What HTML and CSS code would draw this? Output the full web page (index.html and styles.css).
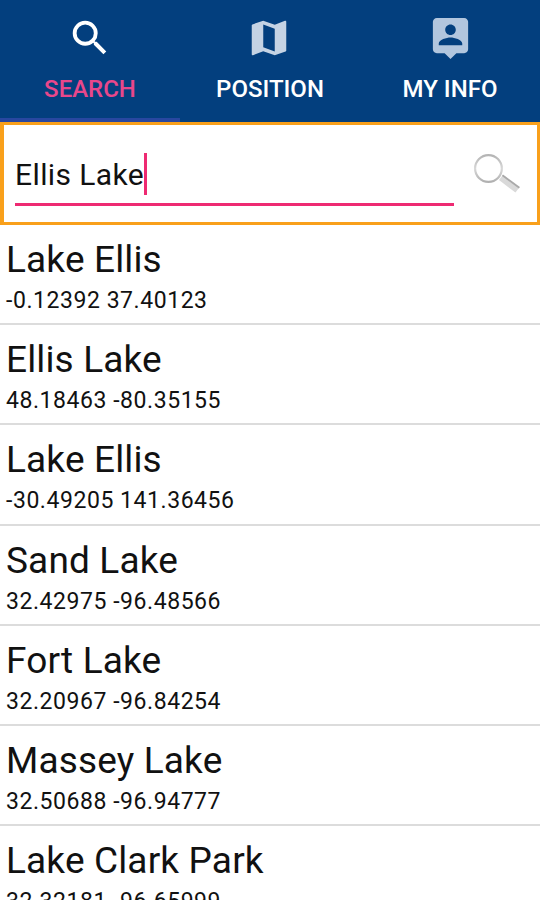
FILE: index.html
```html
<!DOCTYPE html>
<html lang="en">
<head>
    <meta charset="UTF-8">
    <meta name="viewport" content="width=device-width, initial-scale=1.0">
    <title>Search</title>
    <link rel="stylesheet" href="styles.css">
</head>
<body>
    <nav class="tabs">
        <div class="tab active">
            <svg class="icon" viewBox="0 0 24 24"><path d="M15.5 14h-.79l-.28-.27A6.47 6.47 0 0 0 16 9.5 6.5 6.5 0 1 0 9.5 16c1.61 0 3.09-.59 4.23-1.57l.27.28v.79l5 4.99L20.49 19l-4.99-5zm-6 0a4.5 4.5 0 1 1 0-9 4.5 4.5 0 0 1 0 9z"/></svg>
            <span class="label">SEARCH</span>
        </div>
        <div class="tab">
            <svg class="icon map" viewBox="0 0 24 24"><path d="M20.5 3l-.16.03L15 5.1 9 3 3.36 4.9c-.21.07-.36.25-.36.48V20.5c0 .28.22.5.5.5l.16-.03L9 18.9l6 2.1 5.64-1.9c.21-.07.36-.25.36-.48V3.5c0-.28-.22-.5-.5-.5zM15 19l-6-2.11V5l6 2.11V19z"/></svg>
            <span class="label">POSITION</span>
        </div>
        <div class="tab">
            <svg class="icon person" viewBox="0 0 24 24"><path d="M19 2H5c-1.11 0-2 .9-2 2v14c0 1.1.89 2 2 2h4l3 3 3-3h4c1.1 0 2-.9 2-2V4c0-1.1-.9-2-2-2zm-7 3.3c1.49 0 2.7 1.21 2.7 2.7 0 1.49-1.21 2.7-2.7 2.7-1.49 0-2.7-1.21-2.7-2.7 0-1.49 1.21-2.7 2.7-2.7zM18 16H6v-.9c0-2 4-3.1 6-3.1s6 1.1 6 3.1v.9z"/></svg>
            <span class="label">MY INFO</span>
        </div>
    </nav>
    <div class="search">
        <div class="field"><span class="query">Ellis Lake</span><span class="caret"></span></div>
        <svg class="glass" viewBox="0 0 50 44">
            <defs>
                <linearGradient id="ring" x1="0" y1="0" x2="0" y2="1">
                    <stop offset="0" stop-color="#b4b4b4"/>
                    <stop offset=".5" stop-color="#d8d8d8"/>
                    <stop offset="1" stop-color="#b0b0b0"/>
                </linearGradient>
            </defs>
            <path d="M28 25.5L44.5 38" stroke="#d9d9d9" stroke-width="6.5"/>
            <path d="M29.5 23.3L46.5 35.7" stroke="#a9a9a9" stroke-width="1.8"/>
            <circle cx="15.5" cy="16.5" r="13.4" fill="#fff" stroke="url(#ring)" stroke-width="2.2"/>
        </svg>
    </div>
    <div class="results">
        <div class="result">
            <div class="name">Lake Ellis</div>
            <div class="coords">-0.12392 37.40123</div>
        </div>
        <div class="result">
            <div class="name">Ellis Lake</div>
            <div class="coords">48.18463 -80.35155</div>
        </div>
        <div class="result">
            <div class="name">Lake Ellis</div>
            <div class="coords">-30.49205 141.36456</div>
        </div>
        <div class="result">
            <div class="name">Sand Lake</div>
            <div class="coords">32.42975 -96.48566</div>
        </div>
        <div class="result">
            <div class="name">Fort Lake</div>
            <div class="coords">32.20967 -96.84254</div>
        </div>
        <div class="result">
            <div class="name">Massey Lake</div>
            <div class="coords">32.50688 -96.94777</div>
        </div>
        <div class="result">
            <div class="name">Lake Clark Park</div>
            <div class="coords">32.32181 -96.65999</div>
        </div>
    </div>
</body>
</html>
```
FILE: styles.css
```css
* {
    box-sizing: border-box;
}
body {
    margin: 0;
    height: 900px;
    overflow: hidden;
    display: flex;
    flex-direction: column;
    background-color: white;
    font-family: Roboto, sans-serif;
    color: #111;
}
.tabs {
    display: flex;
    flex: none;
    height: 122px;
    background-color: #033f7e;
}
.tab {
    flex: 1;
    display: flex;
    flex-direction: column;
    align-items: center;
    padding-top: 15px;
    border-bottom: 4px solid transparent;
}
.tab.active {
    border-bottom-color: #2847a0;
}
.icon {
    width: 46px;
    height: 46px;
    fill: white;
}
.icon.map {
    margin-right: 3px;
    fill: #c5d3e4;
}
.icon.person {
    width: 47px;
    height: 47px;
    margin: -1px 0 0;
    fill: #b2c6de;
}
.label {
    margin-top: 13px;
    font-size: 24px;
    font-weight: 500;
    line-height: 30px;
    color: white;
}
.active .label {
    color: #e8478b;
}
.search {
    display: flex;
    flex: none;
    height: 103px;
    border: solid #f9a01b;
    border-width: 3px 3px 3px 4px;
    padding: 27px 14px 0 11px;
}
.field {
    display: flex;
    width: 440px;
    height: 54px;
    border-bottom: 3px solid #ee2a72;
}
.query {
    font-size: 30px;
    letter-spacing: 0.4px;
    line-height: 45px;
}
.caret {
    width: 3px;
    height: 42px;
    margin-top: 1px;
    background-color: #ee2a72;
}
.glass {
    width: 50px;
    height: 44px;
    margin-left: 19px;
}
.result {
    height: 100.2px;
    padding: 12px 7px 0 6px;
    border-bottom: 2px solid #dcdcdc;
}
.name {
    font-size: 37px;
    letter-spacing: 0.15px;
    line-height: 45px;
}
.coords {
    margin-top: 6px;
    font-size: 23px;
    letter-spacing: 0.55px;
    line-height: 26px;
}
```
